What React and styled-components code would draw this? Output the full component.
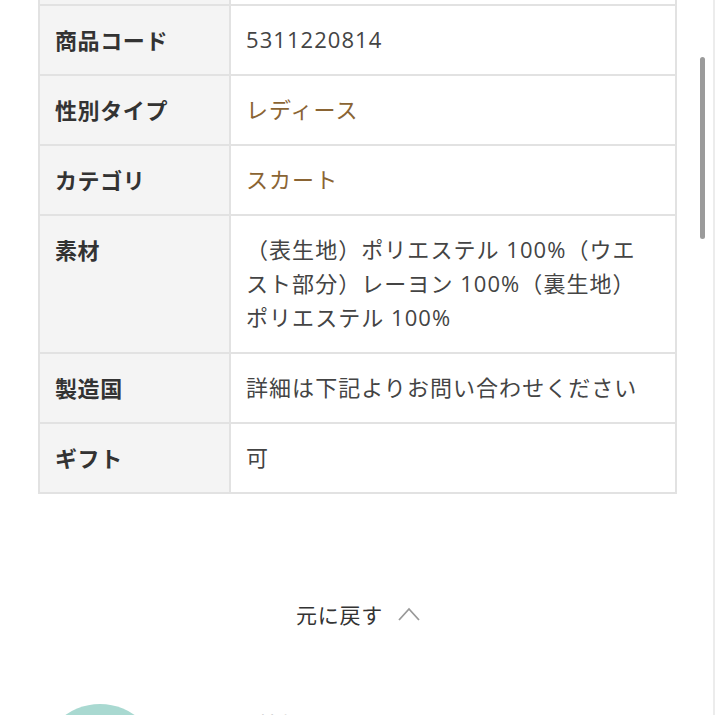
import styled, { createGlobalStyle } from "styled-components";

const Global = createGlobalStyle`
  html, body {
    margin: 0;
    padding: 0;
    background: #fff;
    overflow: hidden;
    height: 715px;
  }
  body {
    font-family: "Noto Sans CJK JP", "Noto Sans", sans-serif;
    color: #333;
  }
`;

const Page = styled.div`
  position: relative;
  width: 715px;
  height: 715px;
  overflow: hidden;
  border-right: 2px solid #ececec;
  box-sizing: border-box;
`;

const Table = styled.div`
  margin: -66px 0 0 38px;
  width: 639px;
  border: 2px solid #e2e2e2;
  border-bottom: none;
  box-sizing: border-box;
`;

const Row = styled.div`
  display: grid;
  grid-template-columns: 191px 1fr;
  border-bottom: 2px solid #e2e2e2;
  min-height: 68px;
`;

const Label = styled.div`
  background: #f4f4f4;
  border-right: 2px solid #e2e2e2;
  padding: 16px 10px 18px 15px;
  font-size: 22px;
  font-weight: 700;
  line-height: 34px;
  letter-spacing: 0.6px;
  color: #333;
`;

const Value = styled.div`
  padding: 16px 24px 18px 15px;
  font-family: "Open Sans", "Noto Sans CJK JP", sans-serif;
  font-size: 22px;
  line-height: 34px;
  letter-spacing: 1.05px;
  color: ${(p) => (p.$link ? "#8a6433" : "#444")};
`;

const Back = styled.div`
  display: flex;
  justify-content: center;
  align-items: center;
  gap: 14px;
  margin: 105px 0 0 0;
  padding-left: 4px;
  font-size: 21px;
  color: #333;
  letter-spacing: 0.8px;
`;

const Footer = styled.div`
  display: flex;
  align-items: flex-start;
  gap: 15px;
  margin: 75px 0 0 40px;
`;

const Avatar = styled.div`
  width: 120px;
  height: 120px;
  border-radius: 50%;
  background: #a9d9d1;
  flex-shrink: 0;
`;

const ShopName = styled.div`
  margin-top: 4px;
  font-size: 21px;
  color: #c8c8c8;
`;

const Scrollbar = styled.div`
  position: absolute;
  top: 57px;
  right: 8px;
  width: 5px;
  height: 182px;
  border-radius: 3px;
  background: #9b9b9b;
`;

const rows = [
  { label: "ブランド", value: "" },
  { label: "商品コード", value: "5311220814" },
  { label: "性別タイプ", value: "レディース", link: true },
  { label: "カテゴリ", value: "スカート", link: true },
  {
    label: "素材",
    value:
      "（表生地）ポリエステル 100%（ウエスト部分）レーヨン 100%（裏生地）ポリエステル 100%",
  },
  { label: "製造国", value: "詳細は下記よりお問い合わせください" },
  { label: "ギフト", value: "可" },
];

export default function App() {
  return (
    <Page>
      <Global />
      <Table>
        {rows.map((r) => (
          <Row key={r.label}>
            <Label>{r.label}</Label>
            <Value $link={r.link}>{r.value}</Value>
          </Row>
        ))}
      </Table>
      <Back>
        <span>元に戻す</span>
        <svg width="24" height="16" viewBox="0 0 24 16" fill="none">
          <path d="M2 14 L12 3 L22 14" stroke="#999" strokeWidth="1.8" />
        </svg>
      </Back>
      <Footer>
        <Avatar />
        <ShopName>ショップ情報</ShopName>
      </Footer>
      <Scrollbar />
    </Page>
  );
}
